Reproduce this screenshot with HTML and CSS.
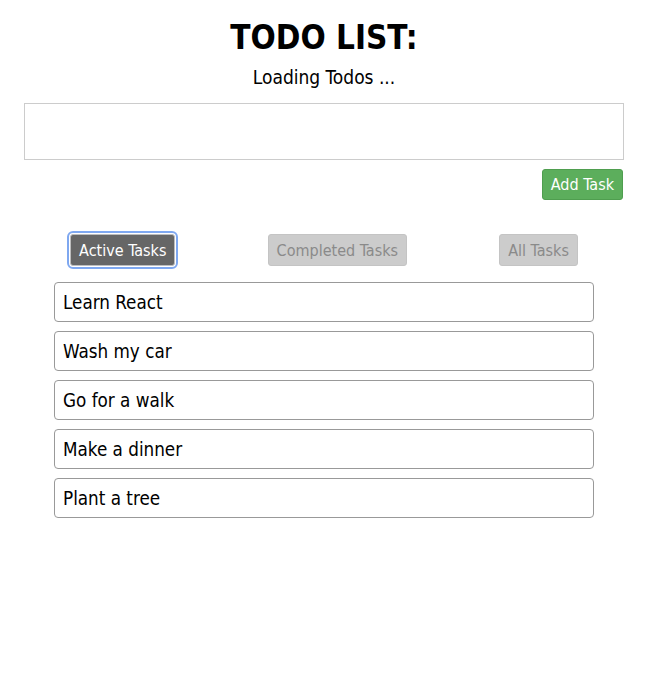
FILE: index.html
```html
<!DOCTYPE html>
<html>
<head>
<meta charset="utf-8">
<link rel="stylesheet" href="styles.css">
</head>
<body>
<div class="app">
  <h1 class="title">TODO LIST:</h1>
  <div class="status">Loading Todos ...</div>
  <textarea class="new-task"></textarea>
  <div class="add-row"><button class="add-btn">Add Task</button></div>
  <div class="filters">
    <button class="filter active">Active Tasks</button>
    <button class="filter">Completed Tasks</button>
    <button class="filter">All Tasks</button>
  </div>
  <ul class="tasks">
    <li class="task">Learn React</li>
    <li class="task">Wash my car</li>
    <li class="task">Go for a walk</li>
    <li class="task">Make a dinner</li>
    <li class="task">Plant a tree</li>
  </ul>
</div>
</body>
</html>
```
FILE: styles.css
```css
html, body {
  margin: 0;
  padding: 0;
  background: #fff;
}
body {
  font-family: "DejaVu Sans Condensed", "DejaVu Sans", sans-serif;
  color: #000;
}
.app {
  width: 600px;
  margin-left: 24px;
  display: flex;
  flex-direction: column;
}
.title {
  margin: 18px 0 0;
  font-size: 33px;
  line-height: 40px;
  font-weight: bold;
  text-align: center;
}
.status {
  text-align: center;
  font-size: 19px;
  line-height: 24px;
  margin-top: 7px;
}
.new-task {
  margin-top: 14px;
  box-sizing: border-box;
  width: 600px;
  height: 57px;
  border: 1px solid #ccc;
  resize: none;
  padding: 4px;
  font-family: inherit;
}
.add-row {
  display: flex;
  justify-content: flex-end;
  margin-top: 9px;
}
.add-btn {
  box-sizing: border-box;
  height: 31px;
  padding: 0 8px;
  background: #5cae5c;
  color: #fff;
  border: 1px solid #4f9e4f;
  border-radius: 3px;
  font-family: inherit;
  font-size: 16px;
  margin-right: 1px;
}
.filters {
  display: flex;
  justify-content: space-around;
  margin-top: 34px;
}
.filter {
  box-sizing: border-box;
  height: 32px;
  padding: 0 8px;
  background: #cccccc;
  color: #8a8a8a;
  border: 1px solid #c4c4c4;
  border-radius: 3px;
  font-family: inherit;
  font-size: 16px;
}
.filter.active {
  background: #666666;
  color: #fff;
  border: 1px solid #bdbdbd;
  outline: 2px solid #7fa8f0;
  outline-offset: 1px;
  border-radius: 3px;
}
.tasks {
  list-style: none;
  margin: 16px 0 0;
  padding: 0;
  display: flex;
  flex-direction: column;
  align-items: center;
  gap: 9px;
}
.task {
  box-sizing: border-box;
  width: 540px;
  height: 40px;
  border: 1px solid #999;
  border-radius: 4px;
  padding-left: 8px;
  display: flex;
  align-items: center;
  font-size: 18.7px;
}
```
